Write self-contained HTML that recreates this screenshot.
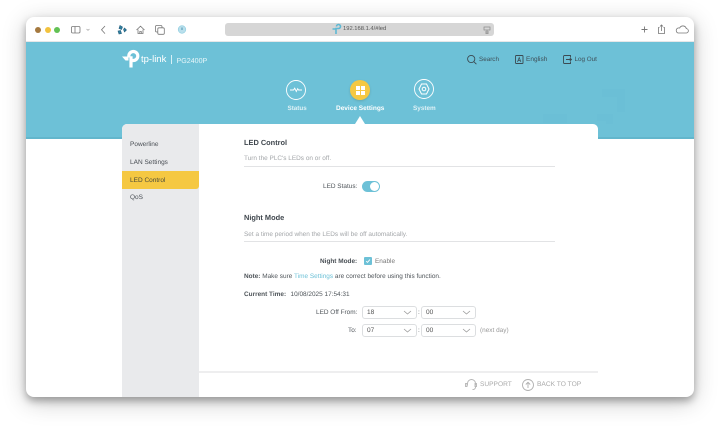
<!DOCTYPE html>
<html><head><meta charset="utf-8">
<style>
html,body{margin:0;padding:0;width:720px;height:431px;overflow:hidden;background:#fff;font-family:"Liberation Sans",sans-serif;text-rendering:geometricPrecision}
.a{position:absolute;white-space:nowrap}
#win{position:absolute;left:26px;top:17px;width:668px;height:380px;background:#fff;border-radius:8px;box-shadow:0 4px 8px rgba(0,0,0,.3),0 5px 24px rgba(0,0,0,.22);overflow:hidden}
.t{font-size:6.500px;color:#4a4f55;line-height:10px}
.h{font-size:7.400px;font-weight:bold;color:#3f464d;line-height:12px}
.s{font-size:6.450px;color:#a3a6a9;line-height:10px}
.l{font-size:6.450px;color:#4f555a;line-height:10px}
.sel{position:absolute;width:53px;height:11px;border:1px solid #dcdee0;border-radius:3px;background:#fff;font-size:6.500px;color:#555;line-height:11px;text-indent:4px}
.sel svg{position:absolute;right:5px;top:3px}
.line{position:absolute;left:244px;width:311px;height:1px;background:#e2e3e5}
svg{position:absolute;overflow:visible}
</style></head><body>
<div id="win"></div>
<div class="a" style="left:26px;top:41px;width:668px;height:1px;background:#e6e7e8"></div>
<!-- traffic lights -->
<div class="a" style="left:35px;top:27px;width:6px;height:6px;border-radius:50%;background:#a5793f"></div>
<div class="a" style="left:44.500px;top:27px;width:6px;height:6px;border-radius:50%;background:#f2c23e"></div>
<div class="a" style="left:54px;top:27px;width:6px;height:6px;border-radius:50%;background:#62c154"></div>
<!-- toolbar icons -->
<svg style="left:0;top:0" width="720" height="42" fill="none" stroke="#777" stroke-width=".8">
<rect x="71.500" y="26.500" width="8.500" height="6.500" rx="1.200"/><path d="M75 26.500v6.500"/>
<path d="M86.500 29l1.500 1.300 1.500-1.300" stroke="#aaa"/>
<path d="M105 26l-3.500 3.800 3.500 3.800"/>
<path d="M120 25.500l2.500 1.500-1 2.500-2.500-1zM124.500 28l2 2-2 2-1-2.500zM118 31l2.500-.5 1 3-2.500 .5z" fill="#2f7f9f" stroke="#25607f" stroke-width=".6"/>
<path d="M136.500 30l4-3.800 4 3.800M138 29.500v4h5v-4M139.800 33.500v-2h1.500v2" />
<rect x="155.500" y="25.500" width="6.500" height="6.500" rx="1.200"/><rect x="157.800" y="27.800" width="6.500" height="6.500" rx="1.200" fill="#fff"/>
<circle cx="182" cy="29.500" r="3.800" fill="#b9dfec" stroke="#8accdf" stroke-width=".6"/><path d="M182 27.500v2.500" stroke="#2f7f9f"/>
<path d="M641.500 29.500h6M644.500 26.500v6" stroke-width=".9"/>
<path d="M659.500 27.500h-1v6h6v-6h-1M661.500 31v-6M660 26.500l1.500-1.500 1.500 1.500"/>
<path d="M678 33h8a2.200 2.200 0 0 0 .3-4.400 3.500 3.500 0 0 0-6.600-.6 2.500 2.500 0 0 0-1.700 5z"/>
</svg>
<!-- url bar -->
<div class="a" style="left:225px;top:23px;width:269px;height:13px;border-radius:3px;background:#d6d6d6"></div>
<svg style="left:332px;top:25px" width="10" height="10" fill="none" stroke="#5fb8d3" stroke-width="1.600"><path d="M4 9V3.500h2.500a2 2 0 1 0-2-2M0.500 4h3"/></svg>
<div class="a" style="left:343px;top:24px;font-size:5.800px;line-height:11px;color:#555">192.168.1.4/#led</div>
<svg style="left:483px;top:26px" width="8" height="8" fill="none" stroke="#888" stroke-width=".7"><rect x="1" y="1" width="6" height="3"/><path d="M2 6h4M4 4v3M2.500 7.500h3"/></svg>
<!-- header -->
<div class="a" style="left:26px;top:42px;width:668px;height:97px;background:#6dc1d7"></div>
<div class="a" style="left:26px;top:137px;width:668px;height:2px;background:#62b6cc"></div>
<!-- faint header decoration -->
<div class="a" style="left:602px;top:89px;width:23px;height:8px;background:#6bbfd6"></div>
<div class="a" style="left:617px;top:89px;width:8px;height:23px;background:#6bbfd6"></div>
<div class="a" style="left:543px;top:114px;width:24px;height:9px;background:#6bbfd6"></div>
<div class="a" style="left:597px;top:114px;width:16px;height:7px;background:#6bbfd6"></div>
<div class="a" style="left:606px;top:114px;width:7px;height:10px;background:#6bbfd6"></div>
<!-- logo -->
<svg style="left:122px;top:50px" width="18" height="18" fill="none" stroke="#fff">
<path d="M9 17.500V6.200M6.800 7.500V6a4.500 4.500 0 1 1 4.500 4.500H9" stroke-width="3.200"/>
<path d="M0 6.500h6.500v4H3.500z" fill="#fff" stroke="none"/>
</svg>
<div class="a" style="left:141px;top:54px;font-size:9.500px;line-height:12px;color:#fff">tp-link</div>
<div class="a" style="left:171px;top:55px;width:1px;height:9px;background:#d8f0f6"></div>
<div class="a" style="left:176.500px;top:55.500px;font-size:7.100px;line-height:11px;color:#e9f7fa">PG2400P</div>
<!-- top right -->
<svg style="left:467px;top:55px" width="11" height="10" fill="none" stroke="#3b4a52" stroke-width=".9"><circle cx="4.200" cy="4" r="3.600"/><path d="M7 6.800l2.400 2.400"/></svg>
<div class="a" style="left:479px;top:55px;font-size:6.300px;line-height:10px;color:#3f4f58">Search</div>
<svg style="left:515px;top:55px" width="10" height="10" fill="none" stroke="#3b4a52" stroke-width=".9"><rect x=".5" y=".5" width="7.500" height="8" rx=".8"/><path d="M2.500 7l1.700-4.500L5.900 7M3.100 5.500h2.200" stroke-width=".7"/></svg>
<div class="a" style="left:526px;top:55px;font-size:6.500px;line-height:10px;color:#3f4f58">English</div>
<svg style="left:563px;top:55px" width="10" height="10" fill="none" stroke="#3b4a52" stroke-width=".9"><path d="M7.500 2.500V.5h-6a1 1 0 0 0-1 1v6a1 1 0 0 0 1 1h6v-2M3 4.500h5.500M6.800 3l1.700 1.500L6.800 6"/></svg>
<div class="a" style="left:574.500px;top:55px;font-size:6.300px;line-height:10px;color:#3f4f58">Log Out</div>
<!-- nav -->
<svg style="left:286px;top:80px" width="20" height="20" fill="none" stroke="#fff"><circle cx="10" cy="10" r="9.500" stroke-width=".9"/><path d="M4 10h3.500l1.200-1.800 1.600 3.300 1.400-2.800.8 1.300h3.500" stroke-width=".9"/></svg>
<div class="a" style="left:287.500px;top:103.500px;font-size:6.300px;font-weight:bold;line-height:10px;color:#def1f6">Status</div>
<div class="a" style="left:350px;top:80px;width:20px;height:20px;border-radius:50%;background:#f5c842;box-shadow:0 1px 2px rgba(80,90,60,.25)"></div>
<div class="a" style="left:356px;top:86px;width:3.500px;height:3.500px;background:#fff"></div>
<div class="a" style="left:361px;top:86px;width:3.500px;height:3.500px;background:#fff"></div>
<div class="a" style="left:356px;top:91px;width:3.500px;height:3.500px;background:#fff"></div>
<div class="a" style="left:361px;top:91px;width:3.500px;height:3.500px;background:#fff"></div>
<div class="a" style="left:336px;top:103.500px;font-size:6.500px;font-weight:bold;line-height:10px;color:#fff">Device Settings</div>
<svg style="left:414px;top:79px" width="20" height="20" fill="none" stroke="#fff"><circle cx="10" cy="10" r="9.500" stroke-width=".9"/><path d="M7.500 5h5l2.500 5-2.500 5h-5L5 10z" stroke-width="1"/><circle cx="10" cy="10" r="1.800" stroke-width="1"/></svg>
<div class="a" style="left:413px;top:103.500px;font-size:6.400px;font-weight:bold;line-height:10px;color:#def1f6">System</div>
<svg style="left:355px;top:116px" width="10" height="8"><path d="M0 8L5 0l5 8z" fill="#fff"/></svg>
<!-- card -->
<div class="a" style="left:122px;top:124px;width:476px;height:273px;background:#fff;border-radius:5px 5px 0 0"></div>
<div class="a" style="left:122px;top:124px;width:77px;height:273px;background:#e9eaec;border-radius:5px 0 0 0"></div>
<div class="a" style="left:122px;top:171px;width:77px;height:18px;background:#f5c842;border-radius:0 0 3px 0"></div>
<div class="a t" style="left:130px;top:140px">Powerline</div>
<div class="a t" style="left:130px;top:157.500px">LAN Settings</div>
<div class="a t" style="left:130px;top:175.500px;color:#4a4a3a">LED Control</div>
<div class="a t" style="left:130px;top:193px">QoS</div>
<!-- content -->
<div class="a h" style="left:244px;top:137px">LED Control</div>
<div class="a s" style="left:244px;top:154px">Turn the PLC's LEDs on or off.</div>
<div class="line" style="top:166px"></div>
<div class="a l" style="left:323px;top:182px">LED Status:</div>
<div class="a" style="left:362px;top:181px;width:18px;height:11px;border-radius:6px;background:#6dc1d7"></div>
<div class="a" style="left:370px;top:182px;width:9px;height:9px;border-radius:50%;background:#fff"></div>
<div class="a h" style="left:244px;top:212px">Night Mode</div>
<div class="a s" style="left:244px;top:229.500px">Set a time period when the LEDs will be off automatically.</div>
<div class="line" style="top:241px"></div>
<div class="a l" style="left:320px;top:257px;font-weight:bold;color:#4a5056">Night Mode:</div>
<div class="a" style="left:364px;top:257px;width:8px;height:8px;border-radius:1px;background:#6dc1d7"></div>
<svg style="left:364px;top:257px" width="8" height="8" fill="none" stroke="#fff" stroke-width=".9"><path d="M2.200 4.200l1.300 1.200 2.400-2.800"/></svg>
<div class="a l" style="left:375px;top:257px;color:#777">Enable</div>
<div class="a l" style="left:244px;top:272px"><b>Note:</b> Make sure <span style="color:#6dc1d7">Time Settings</span> are correct before using this function.</div>
<div class="a l" style="left:244px;top:290px"><b>Current Time:</b></div>
<div class="a l" style="left:290.500px;top:290px">10/08/2025 17:54:31</div>
<div class="a l" style="left:316px;top:308px">LED Off From:</div>
<div class="sel" style="left:362px;top:306px">18<svg width="8" height="5" fill="none" stroke="#999" stroke-width=".8"><path d="M1 1l3.500 3L8 1"/></svg></div>
<div class="a l" style="left:418px;top:308px">:</div>
<div class="sel" style="left:421px;top:306px">00<svg width="8" height="5" fill="none" stroke="#999" stroke-width=".8"><path d="M1 1l3.500 3L8 1"/></svg></div>
<div class="a l" style="left:348px;top:326px">To:</div>
<div class="sel" style="left:362px;top:324px">07<svg width="8" height="5" fill="none" stroke="#999" stroke-width=".8"><path d="M1 1l3.500 3L8 1"/></svg></div>
<div class="a l" style="left:418px;top:326px">:</div>
<div class="sel" style="left:421px;top:324px">00<svg width="8" height="5" fill="none" stroke="#999" stroke-width=".8"><path d="M1 1l3.500 3L8 1"/></svg></div>
<div class="a s" style="left:480px;top:326px;color:#999">(next day)</div>
<!-- footer -->
<div class="a" style="left:199px;top:371px;width:399px;height:2px;background:#eeeeef"></div>
<svg style="left:465px;top:379px" width="13" height="12" fill="none" stroke="#b5b5b5" stroke-width=".9"><path d="M2.500 6.500v-2a4 4 0 0 1 8 0v2M10.500 7v1.500a2.500 2.500 0 0 1-3 2"/><rect x=".5" y="4.500" width="1.500" height="3"/><rect x="10" y="4.500" width="1.500" height="3"/></svg>
<div class="a" style="left:480px;top:379.500px;font-size:6.600px;line-height:10px;color:#aaa">SUPPORT</div>
<svg style="left:522px;top:379px" width="12" height="12" fill="none" stroke="#b0b0b0" stroke-width=".9"><circle cx="6" cy="6" r="5.500"/><path d="M6 9V3.500M3.800 5.500L6 3.300l2.200 2.200"/></svg>
<div class="a" style="left:537px;top:379.500px;font-size:6.650px;line-height:10px;color:#aaa">BACK TO TOP</div>
</body></html>
